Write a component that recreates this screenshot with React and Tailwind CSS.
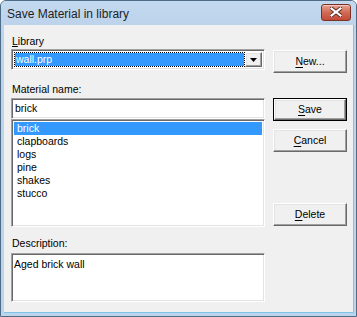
import React from "react";

const raised =
  "border border-t-white border-l-white border-b-[#696969] border-r-[#696969] shadow-[inset_-1px_-1px_0_#a0a0a0,inset_1px_1px_0_#e3e3e3] bg-[#f0f0f0]";
const sunken =
  "border border-t-[#a0a0a0] border-l-[#a0a0a0] border-b-white border-r-white shadow-[inset_1px_1px_0_#696969,inset_-1px_-1px_0_#e3e3e3] bg-white";

function Btn({ label, ul, rest, isDefault, className = "" }) {
  const face = (
    <div className={`${raised} h-full flex items-center justify-center text-black`}>
      <span>
        <span className="underline underline-offset-2">{ul}</span>
        {rest}
      </span>
    </div>
  );
  return isDefault ? (
    <div className={`h-[23px] border border-black ${className}`}>{face}</div>
  ) : (
    <div className={`h-[23px] ${className}`}>{face}</div>
  );
}

export default function App() {
  const items = ["brick", "clapboards", "logs", "pine", "shakes", "stucco"];

  return (
    <div
      className="w-[357px] h-[317px] bg-[#bcd4ec] border border-[#4f6b86] rounded-t-[6px] flex flex-col text-[10.5px] text-black overflow-hidden"
      style={{ fontFamily: '"Liberation Sans", Arial, sans-serif' }}
    >
      {/* Title bar */}
      <div className="h-[24px] shrink-0 flex items-center justify-between pl-[6px] pr-[5px] bg-gradient-to-b from-[#c3d9ef] to-[#bcd3eb]">
        <span className="text-[12px] text-[#1e1e1e] pt-[1px]">Save Material in library</span>
        <div className="w-[30px] h-[17px] mt-[-2px] rounded-[3px] border border-[#7a3226] bg-gradient-to-b from-[#e6a394] via-[#d06a55] to-[#c44a36] flex items-center justify-center shadow-[inset_0_1px_0_#f4c7bd]">
          <svg width="12" height="10" viewBox="0 0 12 10">
            <path d="M1.5 1.5 L10.5 8.5 M10.5 1.5 L1.5 8.5" stroke="#5a2a22" strokeWidth="4" strokeLinecap="square" />
            <path d="M1.5 1.5 L10.5 8.5 M10.5 1.5 L1.5 8.5" stroke="#ffffff" strokeWidth="2.2" strokeLinecap="square" />
          </svg>
        </div>
      </div>

      {/* Client area */}
      <div className="flex-1 ml-[3px] mr-[3px] mb-[3px] bg-[#f0f0f0] flex border-b border-[#7ec3e8] shadow-[1px_0_0_#7ec3e8]">
        {/* Left column */}
        <div className="w-[254px] ml-[7px] pt-[10px] flex flex-col">
          <div className="h-[12px] leading-[12px] pl-[1px]">
            <span className="underline underline-offset-1">L</span>ibrary
          </div>
          <div className={`${sunken} mt-[2px] h-[21px] flex p-[2px]`}>
            <div className="flex-1 m-[1px] mr-[1px] bg-[#3399ff] outline outline-1 outline-dotted outline-[#000] flex items-center pl-[1px] text-white">
              wall.prp
            </div>
            <div className={`${raised} w-[17px] flex items-center justify-center`}>
              <svg width="7" height="4" viewBox="0 0 7 4">
                <path d="M0 0 H7 L3.5 4 Z" fill="#000" />
              </svg>
            </div>
          </div>

          <div className="h-[12px] leading-[12px] mt-[13px] pl-[1px]">Material name:</div>
          <div className={`${sunken} mt-[3px] h-[21px] flex items-center pl-[3px]`}>brick</div>

          <div className={`${sunken} h-[108px] p-[2px] flex flex-col`}>
            {items.map((it, i) => (
              <div
                key={it}
                className={`h-[13px] leading-[13px] pl-[3px] ${i === 0 ? "bg-[#3399ff] text-white" : ""}`}
              >
                {it}
              </div>
            ))}
          </div>

          <div className="h-[12px] leading-[12px] mt-[10px] pl-[1px]">Description:</div>
          <div className={`${sunken} mt-[4px] h-[49px] pl-[2px] pt-[4px] leading-[12px]`}>Aged brick wall</div>
        </div>

        {/* Right column */}
        <div className="w-[74px] ml-[8px] flex flex-col">
          <Btn ul="N" rest="ew..." className="mt-[25px]" />
          <Btn ul="S" rest="ave" isDefault className="mt-[25px]" />
          <Btn ul="C" rest="ancel" className="mt-[8px]" />
          <Btn ul="D" rest="elete" className="mt-[51px]" />
        </div>
      </div>
    </div>
  );
}
